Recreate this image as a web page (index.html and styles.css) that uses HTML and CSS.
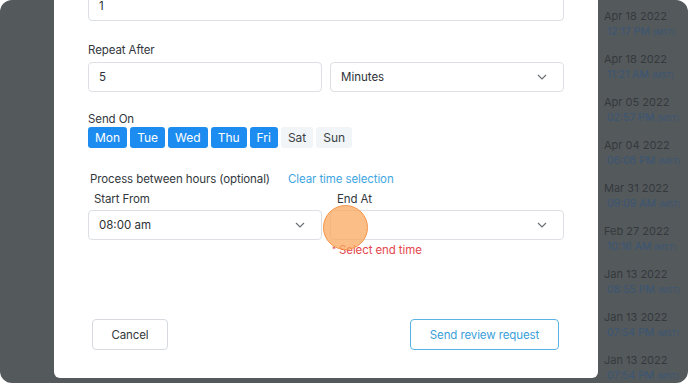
FILE: index.html
```html
<!DOCTYPE html>
<html lang="en">
<head>
  <meta charset="UTF-8">
  <title>Send review request</title>
  <link rel="stylesheet" href="styles.css">
</head>
<body>
  <div class="screen">
    <div class="backdrop-left"></div>

    <div class="modal">
      <div class="field first-field">1</div>

      <label class="label">Repeat After</label>
      <div class="row">
        <div class="field">5</div>
        <div class="field select">
          <span>Minutes</span>
          <svg class="chevron" viewBox="0 0 10 6"><path d="M1 1l4 4 4-4"/></svg>
        </div>
      </div>

      <label class="label send-on">Send On</label>
      <div class="days">
        <button class="day on">Mon</button>
        <button class="day on">Tue</button>
        <button class="day on">Wed</button>
        <button class="day on">Thu</button>
        <button class="day on">Fri</button>
        <button class="day">Sat</button>
        <button class="day">Sun</button>
      </div>

      <div class="hours-head">
        <span class="label">Process between hours (optional)</span>
        <a href="#" class="clear-link">Clear time selection</a>
      </div>

      <div class="row">
        <div class="col">
          <label class="label sub">Start From</label>
          <div class="field select">
            <span>08:00 am</span>
            <svg class="chevron" viewBox="0 0 10 6"><path d="M1 1l4 4 4-4"/></svg>
          </div>
        </div>
        <div class="col">
          <label class="label sub">End At</label>
          <div class="field select">
            <span></span>
            <svg class="chevron" viewBox="0 0 10 6"><path d="M1 1l4 4 4-4"/></svg>
          </div>
          <div class="error"><span class="mark">*</span> Select end time</div>
        </div>
      </div>

      <div class="footer">
        <button class="btn">Cancel</button>
        <button class="btn primary">Send review request</button>
      </div>
    </div>

    <ul class="history">
      <li><div class="date">Apr 18 2022</div><div class="time">12:17 PM <small>(MST)</small></div></li>
      <li><div class="date">Apr 18 2022</div><div class="time">11:21 AM <small>(MST)</small></div></li>
      <li><div class="date">Apr 05 2022</div><div class="time">02:57 PM <small>(MST)</small></div></li>
      <li><div class="date">Apr 04 2022</div><div class="time">06:08 PM <small>(MST)</small></div></li>
      <li><div class="date">Mar 31 2022</div><div class="time">09:09 AM <small>(MST)</small></div></li>
      <li><div class="date">Feb 27 2022</div><div class="time">10:16 AM <small>(MST)</small></div></li>
      <li><div class="date">Jan 13 2022</div><div class="time">08:55 PM <small>(MST)</small></div></li>
      <li><div class="date">Jan 13 2022</div><div class="time">07:54 PM <small>(MST)</small></div></li>
      <li><div class="date">Jan 13 2022</div><div class="time">07:54 PM <small>(MST)</small></div></li>
    </ul>

    <div class="click-dot"></div>
  </div>
</body>
</html>
```

FILE: styles.css
```css
/* Global Styles */
* {
  margin: 0;
  padding: 0;
  box-sizing: border-box;
  font-family: 'Inter', 'Liberation Sans', sans-serif;
}

body {
  background: #ffffff;
  width: 688px;
  height: 384px;
  overflow: hidden;
}

.screen {
  position: relative;
  display: flex;
  width: 688px;
  height: 383px;
  background-color: #54595c;
  border-radius: 12px;
  overflow: hidden;
}

.backdrop-left {
  width: 54px;
  flex-shrink: 0;
}

/* Modal */
.modal {
  width: 544px;
  height: 378px;
  flex-shrink: 0;
  background-color: #ffffff;
  border-radius: 0 0 6px 6px;
  padding: 0 34px;
  display: flex;
  flex-direction: column;
  color: #33383d;
  font-size: 11.5px;
}

.label {
  display: block;
  font-size: 11.5px;
  line-height: 16px;
  color: #33383d;
  letter-spacing: -0.1px;
}

.first-field + .label {
  margin-top: 21px;
}

.field {
  height: 30px;
  border: 1px solid #dcdfe3;
  border-radius: 4px;
  padding: 0 10px;
  display: flex;
  align-items: center;
  font-size: 11.5px;
  color: #2d3136;
  background: #ffffff;
}

.first-field {
  margin-top: -9px;
}

.row {
  display: flex;
  gap: 8px;
  margin-top: 4px;
}

.row > .field,
.col {
  width: 234px;
}

.select {
  justify-content: space-between;
  padding-right: 16px;
}

.chevron {
  width: 10px;
  height: 6px;
  fill: none;
  stroke: #6b7075;
  stroke-width: 1.2;
}

.send-on {
  margin-top: 19px;
}

/* Days */
.days {
  display: flex;
  gap: 3px;
}

.day {
  height: 21px;
  padding: 0 7px;
  border: none;
  border-radius: 3px;
  background-color: #f1f5f8;
  color: #3a3f44;
  font-size: 12px;
}

.day.on {
  background-color: #1c8cf0;
  color: #ffffff;
}

/* Hours */
.hours-head {
  display: flex;
  gap: 18px;
  margin-top: 23px;
  padding-left: 2px;
}

.clear-link {
  color: #3fa6e2;
  text-decoration: none;
  font-size: 11.5px;
  line-height: 16px;
  letter-spacing: -0.1px;
}

.hours-head + .row {
  margin-top: 4px;
}

.sub {
  padding-left: 6px;
  margin-bottom: 3px;
}

.col:last-child .sub {
  padding-left: 7px;
}

.error {
  margin-top: 1px;
  padding-left: 2px;
  color: #e3474d;
  font-size: 11.5px;
  line-height: 16px;
  letter-spacing: -0.1px;
}

.error .mark {
  font-size: 8px;
  vertical-align: 2px;
}

/* Footer */
.footer {
  margin-top: auto;
  margin-bottom: 28px;
  padding: 0 5px 0 4px;
  display: flex;
  justify-content: space-between;
}

.btn {
  height: 31px;
  width: 76px;
  border: 1px solid #d6dadf;
  border-radius: 4px;
  background: #ffffff;
  color: #33383d;
  font-size: 11.5px;
  letter-spacing: -0.1px;
}

.primary {
  width: 149px;
  border: 1.5px solid #5bb3e3;
  color: #3a9fd8;
}

/* Dimmed history list */
.history {
  list-style: none;
  width: 90px;
  padding: 9px 0 0 6px;
  white-space: nowrap;
}

.history li {
  height: 43px;
}

.date {
  font-size: 11px;
  line-height: 15px;
  color: #35393d;
}

.time {
  font-size: 10.5px;
  line-height: 15px;
  color: #3a5675;
  padding-left: 3px;
}

.time small {
  font-size: 7.5px;
}

/* Click indicator */
.click-dot {
  position: absolute;
  left: 323px;
  top: 205px;
  width: 45px;
  height: 45px;
  border-radius: 50%;
  background-color: rgba(250, 168, 95, 0.75);
  border: 1.5px solid #f5964a;
}
```
